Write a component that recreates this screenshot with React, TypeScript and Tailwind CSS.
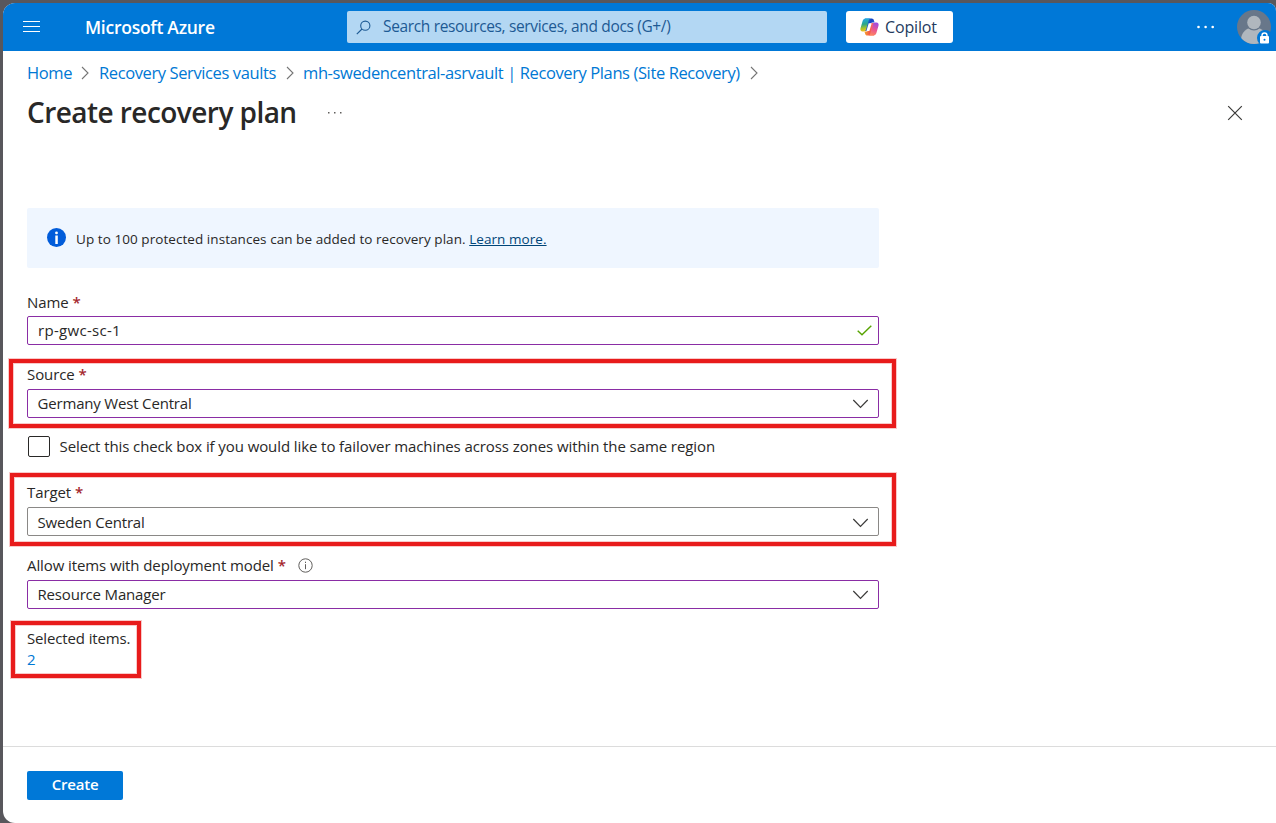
import type { ReactNode } from "react";

function Chevron({ className = "" }: { className?: string }) {
  return (
    <svg className={className} width="8" height="14" viewBox="0 0 8 14" fill="none" stroke="#767676" strokeWidth="1.1">
      <path d="M1 1l6 6-6 6" />
    </svg>
  );
}

function ChevronDown() {
  return (
    <svg width="17" height="10" viewBox="0 0 17 10" fill="none" stroke="#3b3a39" strokeWidth="1.2">
      <path d="M1.3 1l7.2 7.4L15.7 1" />
    </svg>
  );
}

function CopilotLogo() {
  return (
    <svg width="19" height="18" viewBox="0 0 19 18">
      <defs>
        <linearGradient id="cpLeft" x1="0.3" y1="0" x2="0.4" y2="1">
          <stop offset="0" stopColor="#1fa7ea" />
          <stop offset="0.45" stopColor="#2ba68a" />
          <stop offset="0.75" stopColor="#a5c32c" />
          <stop offset="1" stopColor="#f4c21a" />
        </linearGradient>
        <linearGradient id="cpRight" x1="0.6" y1="0" x2="0.3" y2="1">
          <stop offset="0" stopColor="#a04be0" />
          <stop offset="0.5" stopColor="#ea5592" />
          <stop offset="1" stopColor="#ff8a5c" />
        </linearGradient>
        <linearGradient id="cpTop" x1="0" y1="0" x2="1" y2="0.5">
          <stop offset="0" stopColor="#1f9fe8" />
          <stop offset="0.6" stopColor="#1543c4" />
          <stop offset="1" stopColor="#2559d4" />
        </linearGradient>
        <linearGradient id="cpBottom" x1="0" y1="0" x2="1" y2="0">
          <stop offset="0" stopColor="#f5a62c" />
          <stop offset="0.5" stopColor="#f4584c" />
          <stop offset="1" stopColor="#fb7a72" />
        </linearGradient>
      </defs>
      <path d="M5 .4h6.700c1.200 0 1.900.8 2.200 1.800L14.600 4.600h-2.100c-1.300 0-2 .7-2.400 1.900L8 13H4.200c1 0 .6-1 .9-2z" fill="url(#cpTop)" />
      <path d="M14 17.600H7.300c-1.200 0-1.900-.8-2.200-1.800L4.400 13.400h2.100c1.300 0 2-.7 2.400-1.900L11 5h3.800c-1 0-.6 1-.9 2z" fill="url(#cpBottom)" />
      <path d="M5.400.4h5.300C9.500.6 9 1.500 8.600 2.700L6.200 11.200c-.4 1.400-1.100 2.200-2.400 2.200H2.600C.8 13.400 0 12 .5 10.200L2.600 2.900C3.100 1.300 4 .4 5.400.4z" fill="url(#cpLeft)" />
      <path d="M13.600 17.600H8.300c1.200-.2 1.700-1.100 2.100-2.300l2.400-8.500c.4-1.400 1.100-2.200 2.400-2.200h1.200c1.800 0 2.600 1.400 2.100 3.200l-2.100 7.300c-.5 1.600-1.400 2.500-2.800 2.500z" fill="url(#cpRight)" />
      <path d="M8.700 5.200h3l-2.300 7.700h-3z" fill="#fff" />
    </svg>
  );
}

function Header() {
  return (
    <header className="flex h-12 shrink-0 items-center bg-[#0078d7] text-white">
      <svg className="ml-5 shrink-0" width="17" height="12" viewBox="0 0 17 12" fill="#fff">
        <path d="M0 0h17v1H0zM0 5h17v1H0zM0 10h17v1H0z" />
      </svg>
      <span className="ml-[45px] w-[262px] whitespace-nowrap text-[17.5px] font-semibold tracking-[-0.26px]">
        Microsoft Azure
      </span>
      <div className="flex h-8 w-[480px] shrink-0 items-center rounded-[2px] bg-[#b3d7f3] pl-[9px] text-[#1d5a94]">
        <svg width="15" height="15" viewBox="0 0 15 15" fill="none" stroke="#1d5a94" strokeWidth="1.1">
          <circle cx="9.300" cy="5.700" r="4.600" />
          <path d="M6 9L.8 14.200" />
        </svg>
        <span className="ml-3 whitespace-nowrap text-[15.500px] tracking-[-0.35px]">
          Search resources, services, and docs (G+/)
        </span>
      </div>
      <button className="ml-[19px] flex h-8 w-[107px] shrink-0 items-center rounded-[3px] bg-white pl-[14px] text-[#243a5e]">
        <CopilotLogo />
        <span className="ml-[6px] text-[16px] font-medium tracking-[-0.15px]">Copilot</span>
      </button>
      <svg className="ml-[243px] shrink-0" width="20" height="4" viewBox="0 0 20 4" fill="#fff">
        <circle cx="2.500" cy="2" r="1.300" />
        <circle cx="9.600" cy="2" r="1.300" />
        <circle cx="16.700" cy="2" r="1.300" />
      </svg>
      <svg className="ml-[21px] shrink-0" width="36" height="36" viewBox="0 0 36 36">
        <defs>
          <clipPath id="avatar">
            <circle cx="17" cy="18" r="17" />
          </clipPath>
        </defs>
        <g clipPath="url(#avatar)">
          <rect width="36" height="36" fill="#68778a" />
          <circle cx="17" cy="31" r="13" fill="#b0b7be" />
          <circle cx="17" cy="13.500" r="8" fill="#68778a" />
          <circle cx="17" cy="13.500" r="6.800" fill="#b0b7be" />
          <circle cx="28" cy="29" r="8" fill="#0078d7" />
        </g>
        <rect x="23" y="27" width="9" height="7.500" rx="1" fill="#fff" />
        <path d="M25 28v-1.500a2.500 2.500 0 0 1 5 0V28" fill="none" stroke="#fff" strokeWidth="1.400" />
        <circle cx="27.500" cy="30.700" r="1" fill="#0078d7" />
      </svg>
    </header>
  );
}

function Label({ children, className = "" }: { children: ReactNode; className?: string }) {
  return (
    <div className={`flex items-center whitespace-nowrap text-[15px] tracking-[-0.1px] ${className}`}>
      {children}
      <span className="ml-1 font-semibold text-[#a4262c]">*</span>
    </div>
  );
}

function Select({ value, border = "border-[#8a2da5]", pad = "" }: { value: string; border?: string; pad?: string }) {
  return (
    <div
      className={`flex h-[29px] w-[852px] items-center justify-between rounded-[2px] border bg-white pl-[9.500px] pr-[9px] text-[15px] tracking-[-0.18px] ${border} ${pad}`}
    >
      <span>{value}</span>
      <ChevronDown />
    </div>
  );
}

export default function App() {
  return (
    <div className="h-[823px] w-[1276px] overflow-hidden bg-[#58575c] pl-[3px] pt-[3px] font-['Open_Sans','Noto_Sans',sans-serif] text-[#292827]">
      <div className="flex h-[820px] flex-col overflow-hidden rounded-bl-[12px] rounded-tl-[12px] rounded-tr-[8px] bg-white">
        <Header />

        <nav className="mt-[10px] flex h-6 items-center whitespace-nowrap pl-6 text-[16.500px] tracking-[-0.39px] text-[#0078d4]">
          <a className="w-[54px]">Home</a>
          <Chevron />
          <a className="ml-[10px] w-[187px]">Recovery Services vaults</a>
          <Chevron />
          <a className="ml-[9px] w-[447px]">mh-swedencentral-asrvault | Recovery Plans (Site Recovery)</a>
          <Chevron />
        </nav>

        <div className="mt-[7px] flex h-10 items-center pl-6">
          <h1 className="w-[301px] whitespace-nowrap text-[28px] font-semibold tracking-[-0.55px]">
            Create recovery plan
          </h1>
          <svg width="14" height="3" viewBox="0 0 14 3" fill="#605e5c">
            <path d="M0 1h1.500v1.500H0zM6 1h1.500v1.500H6zM12 1h1.500v1.500H12z" />
          </svg>
          <svg className="ml-[885px] mt-[2px]" width="16" height="16" viewBox="0 0 16 16" fill="none" stroke="#3b3a39" strokeWidth="1.200">
            <path d="M1.200 1.200l13.600 13.600M14.800 1.200L1.200 14.800" />
          </svg>
        </div>

        <div className="ml-6 mt-[76px] flex h-[60px] w-[852px] shrink-0 items-center rounded-[2px] bg-[#eff6ff] pl-5 text-[13.500px] tracking-[0.06px]">
          <svg className="mb-[2px]" width="19" height="19" viewBox="0 0 19 19">
            <circle cx="9.500" cy="9.500" r="9.500" fill="#015cda" />
            <circle cx="9.500" cy="4.900" r="1.400" fill="#fff" />
            <path d="M8.300 7.500h2.500V16H8.300z" fill="#fff" />
          </svg>
          <span className="ml-[10px] mt-[2px] whitespace-nowrap">
            Up to 100 protected instances can be added to recovery plan.{" "}
            <a className="text-[#004578] underline">Learn more.</a>
          </span>
        </div>

        <Label className="ml-6 mt-[23px] h-[22px]">Name</Label>
        <div className="ml-6 mt-[3px] flex h-[29px] w-[852px] shrink-0 items-center justify-between rounded-[2px] border border-[#8a2da5] pl-[10px] pr-[6px] text-[15px] tracking-[0.3px]">
          <span>rp-gwc-sc-1</span>
          <svg width="15" height="11" viewBox="0 0 15 11" fill="none" stroke="#57a300" strokeWidth="1.400">
            <path d="M.7 5.700l4.300 4.100L14.300.7" />
          </svg>
        </div>

        <section className="ml-[6px] mt-[14px] h-[69px] w-[887px] shrink-0 border-4 border-[#e81b1b] pl-[14px] shadow-[0_0_0_1px_#f9c9c9,inset_0_0_0_1px_#f9c9c9]">
          <Label className="mb-1 h-[22px]">Source</Label>
          <Select value="Germany West Central" />
        </section>

        <label className="ml-[25px] mt-2 flex h-[21px] shrink-0 items-center whitespace-nowrap text-[15px] tracking-[-0.09px]">
          <span className="mr-[9.500px] h-[21px] w-[22px] rounded-[2px] border border-[#292827]" />
          Select this check box if you would like to failover machines across zones within the same region
        </label>

        <section className="ml-[7px] mt-4 h-[73px] w-[886px] shrink-0 border-4 border-[#e81b1b] pl-[13px] shadow-[0_0_0_1px_#f9c9c9,inset_0_0_0_1px_#f9c9c9]">
          <Label className="h-[30px]">Target</Label>
          <Select value="Sweden Central" border="border-[#8a8886]" pad="pt-[2px]" />
        </section>

        <div className="ml-6 mt-2 flex h-[22px] shrink-0 items-center">
          <Label>Allow items with deployment model</Label>
          <svg className="ml-3" width="15" height="15" viewBox="0 0 15 15" fill="none" stroke="#605e5c">
            <circle cx="7.500" cy="7.500" r="6.700" />
            <path d="M7.500 6.200v5M7.500 3.700v1.300" />
          </svg>
        </div>
        <div className="ml-6 mt-1">
          <Select value="Resource Manager" />
        </div>

        <section className="ml-2 mt-3 h-[57px] w-[130px] shrink-0 whitespace-nowrap border-4 border-[#e81b1b] pl-3 pt-[3px] text-[15px] leading-[21px] tracking-[-0.14px] shadow-[0_0_0_1px_#f9c9c9,inset_0_0_0_1px_#f9c9c9]">
          <div>Selected items.</div>
          <a className="block text-[#0078d4]">2</a>
        </section>

        <footer className="mt-auto h-[77px] shrink-0 border-t border-[#dcdcdc] pl-6 pt-6">
          <button className="flex h-[29px] w-24 items-center justify-center rounded-[2px] bg-[#0078d7] pb-[2px] text-[15px] font-semibold tracking-[-0.2px] text-white">
            Create
          </button>
        </footer>
      </div>
    </div>
  );
}
